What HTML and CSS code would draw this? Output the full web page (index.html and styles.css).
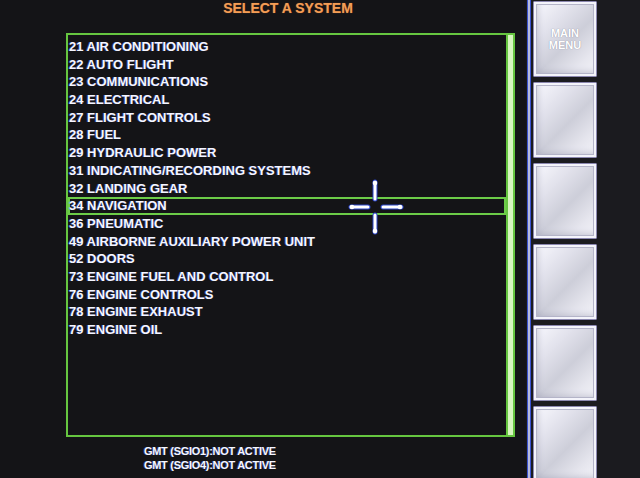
FILE: index.html
```html
<!DOCTYPE html>
<html lang="en">
<head>
    <meta charset="UTF-8">
    <meta name="viewport" content="width=device-width, initial-scale=1.0">
    <title>Select A System</title>
    <link rel="stylesheet" href="styles.css">
</head>
<body>

    <div class="screen">
        <main class="main">
            <h1 class="title">SELECT A SYSTEM</h1>

            <div class="panel">
                <ul class="systems">
                    <li>21 AIR CONDITIONING</li>
                    <li>22 AUTO FLIGHT</li>
                    <li>23 COMMUNICATIONS</li>
                    <li>24 ELECTRICAL</li>
                    <li>27 FLIGHT CONTROLS</li>
                    <li>28 FUEL</li>
                    <li>29 HYDRAULIC POWER</li>
                    <li>31 INDICATING/RECORDING SYSTEMS</li>
                    <li>32 LANDING GEAR</li>
                    <li class="selected">34 NAVIGATION</li>
                    <li>36 PNEUMATIC</li>
                    <li>49 AIRBORNE AUXILIARY POWER UNIT</li>
                    <li>52 DOORS</li>
                    <li>73 ENGINE FUEL AND CONTROL</li>
                    <li>76 ENGINE CONTROLS</li>
                    <li>78 ENGINE EXHAUST</li>
                    <li>79 ENGINE OIL</li>
                </ul>
                <div class="rail"></div>

                <!-- touch cursor -->
                <svg class="cursor" width="60" height="60" viewBox="0 0 60 60">
                    <g stroke="#2a44c8" stroke-width="5" stroke-linecap="round">
                        <line x1="29" y1="5" x2="29" y2="22"/>
                        <line x1="29" y1="38" x2="29" y2="55"/>
                        <line x1="5" y1="30" x2="22" y2="30"/>
                        <line x1="37" y1="30" x2="55" y2="30"/>
                    </g>
                    <g stroke="#ffffff" stroke-width="3" stroke-linecap="round">
                        <line x1="29" y1="5" x2="29" y2="22"/>
                        <line x1="29" y1="38" x2="29" y2="55"/>
                        <line x1="5" y1="30" x2="22" y2="30"/>
                        <line x1="37" y1="30" x2="55" y2="30"/>
                    </g>
                    <g fill="#ffffff">
                        <circle cx="29" cy="6" r="2.3"/>
                        <circle cx="29" cy="54" r="2.3"/>
                        <circle cx="6" cy="30" r="2.3"/>
                        <circle cx="54" cy="30" r="2.3"/>
                    </g>
                </svg>
            </div>

            <div class="status">
                <div>GMT (SGIO1):NOT ACTIVE</div>
                <div>GMT (SGIO4):NOT ACTIVE</div>
            </div>
        </main>

        <aside class="side">
            <div class="edge"></div>
            <div class="keys">
                <button class="key">MAIN<br>MENU</button>
                <button class="key"></button>
                <button class="key"></button>
                <button class="key"></button>
                <button class="key"></button>
                <button class="key"></button>
            </div>
        </aside>
    </div>

</body>
</html>
```

FILE: styles.css
```css
body {
    margin: 0;
    padding: 0;
    background-color: #141417;
    font-family: "Liberation Sans", Arial, sans-serif;
    overflow: hidden;
}

.screen {
    display: flex;
    width: 640px;
    height: 478px;
    overflow: hidden;
}

.main {
    width: 526px;
    background-color: #141417;
}

.title {
    margin: 0;
    text-align: center;
    padding-left: 50px;
    font-size: 14px;
    line-height: 16px;
    font-weight: bold;
    color: #f39d56;
    text-shadow: 0 0 1px #8a4a20;
}

.panel {
    position: relative;
    display: flex;
    margin: 17px 0 0 66px;
    width: 445px;
    height: 400px;
    border: 2px solid #66c640;
}

.systems {
    flex: 1;
    list-style: none;
    margin: 0;
    padding: 3px 0 0 0;
}

.systems li {
    height: 17.7px;
    line-height: 17.7px;
    padding-left: 1px;
    font-size: 13px;
    font-weight: bold;
    color: #f6f6ff;
    text-shadow: -1px 0 rgba(70, 100, 230, 0.55);
    white-space: nowrap;
}

.systems li.selected {
    box-shadow: inset 0 0 0 2px #6ccc48;
}

.rail {
    width: 5px;
    border-left: 2px solid #66c640;
    background-color: #d8f6c0;
}

.cursor {
    position: absolute;
    left: 278px;
    top: 142px;
}

.status {
    margin: 7px 0 0 144px;
    font-size: 11px;
    line-height: 14px;
    font-weight: bold;
    letter-spacing: -0.3px;
    color: #f6f6ff;
    text-shadow: -1px 0 rgba(70, 100, 230, 0.55);
}

.side {
    flex: 1;
    display: flex;
    background-color: #1b1b1f;
}

.edge {
    width: 1px;
    margin-left: 1px;
    border-left: 1px solid #3a52d0;
    border-right: 1px solid #3a52d0;
    background-color: #b8bcdc;
    padding-right: 1px;
}

.keys {
    display: flex;
    flex-direction: column;
    gap: 5px;
    padding: 1px 0 0 2px;
}

.key {
    flex-shrink: 0;
    width: 64px;
    height: 76px;
    padding: 0;
    border: 1px solid #8c88b0;
    border-radius: 1px;
    background: linear-gradient(135deg, #fafaff 0%, #e2e2ec 30%, #cdced9 55%, #e6e6ee 80%, #f4f4f9 100%);
    box-shadow: inset 0 0 0 2px #f4f4fb, inset 0 0 0 3px #b4b4c8, inset 4px -4px 6px rgba(120, 120, 150, 0.35);
    font-family: "Liberation Sans", Arial, sans-serif;
    font-size: 11px;
    line-height: 12px;
    font-weight: bold;
    color: #ffffff;
    text-shadow: 0 0 1px #7a7a90;
}
```
